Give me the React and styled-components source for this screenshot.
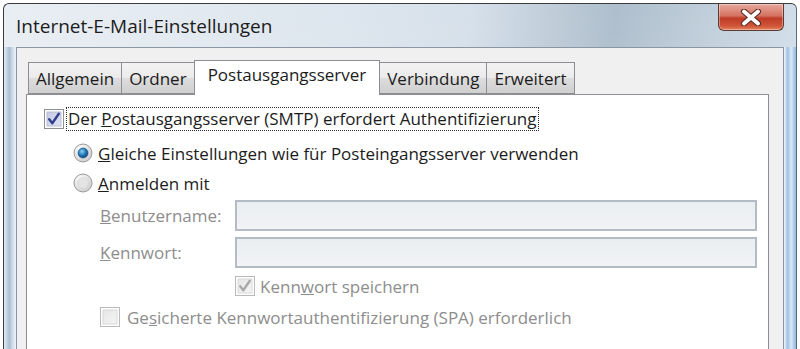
import React from "react";
import styled, { createGlobalStyle } from "styled-components";

const GlobalStyle = createGlobalStyle`
  html, body {
    margin: 0;
    padding: 0;
    background: #ffffff;
    overflow: hidden;
  }
  body {
    width: 800px;
    height: 349px;
    font-family: "Open Sans", "Noto Sans", Arial, sans-serif;
  }
`;

const tabs = [
  { id: "general", label: "Allgemein" },
  { id: "folder", label: "Ordner" },
  { id: "outgoing", label: "Postausgangsserver" },
  { id: "connection", label: "Verbindung" },
  { id: "advanced", label: "Erweitert" },
];

function CheckBox({ checked, disabled }) {
  const border = disabled ? "#b9b9b9" : "#8e8f8f";
  const fill = disabled ? "#f4f4f4" : "#dfe3f3";
  const tick = disabled ? "#a9a9a9" : "#333f8c";
  return (
    <svg width="20" height="20" viewBox="0 0 20 20">
      <defs>
        <linearGradient id={`cb-${disabled ? "d" : "e"}`} x1="0" y1="0" x2="1" y2="1">
          <stop offset="0" stopColor={disabled ? "#e6e6e6" : "#c6cbe4"} />
          <stop offset="1" stopColor={fill} />
        </linearGradient>
      </defs>
      <rect x="0.5" y="0.5" width="19" height="19" fill="#fdfdfd" stroke={border} />
      <rect x="3" y="3" width="14" height="14" fill={`url(#cb-${disabled ? "d" : "e"})`} stroke={disabled ? "#d3d3d3" : "#aeb3cf"} strokeWidth="0.8" />
      {checked && (
        <path d="M5.2 10.2 L8.3 14.2 L14.8 4.8" fill="none" stroke={tick} strokeWidth="2.4" strokeLinecap="round" strokeLinejoin="round" />
      )}
    </svg>
  );
}

function Radio({ checked }) {
  return (
    <svg width="20" height="20" viewBox="0 0 20 20">
      <defs>
        <radialGradient id="rd-ring" cx="0.35" cy="0.3" r="0.8">
          <stop offset="0" stopColor="#ffffff" />
          <stop offset="1" stopColor="#c9c9c9" />
        </radialGradient>
        <radialGradient id="rd-dot" cx="0.4" cy="0.35" r="0.7">
          <stop offset="0" stopColor="#8fd0f5" />
          <stop offset="0.55" stopColor="#1e78b8" />
          <stop offset="1" stopColor="#0d3f6e" />
        </radialGradient>
      </defs>
      <circle cx="10" cy="10" r="9" fill="url(#rd-ring)" stroke="#9a9a9a" />
      {checked ? (
        <circle cx="10" cy="10" r="5" fill="url(#rd-dot)" stroke="#1b4c78" strokeWidth="0.6" />
      ) : (
        <circle cx="10" cy="10" r="5.5" fill="#e4e4e4" stroke="#d0d0d0" strokeWidth="0.6" />
      )}
    </svg>
  );
}

export default function App() {
  return (
    <>
      <GlobalStyle />
      <Window>
        <TitleBar>
          <Title>Internet-E-Mail-Einstellungen</Title>
          <CloseButton>
            <svg width="24" height="17" viewBox="0 0 24 17">
              <path d="M5 2.5 L19 14.5 M19 2.5 L5 14.5" stroke="#5a2a22" strokeWidth="6" strokeLinecap="round" />
              <path d="M5 2.5 L19 14.5 M19 2.5 L5 14.5" stroke="#ffffff" strokeWidth="3.8" strokeLinecap="round" />
            </svg>
          </CloseButton>
        </TitleBar>
        <FrameBody>
          <SideFrame side="left" />
          <Client>
            <TabStrip>
              {tabs.map((tab) => (
                <Tab key={tab.id} active={tab.id === "outgoing"}>
                  {tab.label}
                </Tab>
              ))}
            </TabStrip>
            <Panel>
              <CheckRow>
                <CheckBox checked />
                <FocusLabel>
                  Der <u>P</u>ostausgangsserver (SMTP) erfordert Authentifizierung
                </FocusLabel>
              </CheckRow>
              <RadioGroup>
                <OptionRow>
                  <Radio checked />
                  <Label>
                    <u>G</u>leiche Einstellungen wie für Posteingangsserver verwenden
                  </Label>
                </OptionRow>
                <OptionRow>
                  <Radio />
                  <Label>
                    <u>A</u>nmelden mit
                  </Label>
                </OptionRow>
              </RadioGroup>
              <Fields>
                <FieldLabel>
                  <u>B</u>enutzername:
                </FieldLabel>
                <Input />
                <FieldLabel>
                  <u>K</u>ennwort:
                </FieldLabel>
                <Input />
                <span />
                <OptionRow>
                  <CheckBox checked disabled />
                  <Label disabled>
                    Kenn<u>w</u>ort speichern
                  </Label>
                </OptionRow>
              </Fields>
              <SpaRow>
                <CheckBox disabled />
                <Label disabled>
                  Ge<u>s</u>icherte Kennwortauthentifizierung (SPA) erforderlich
                </Label>
              </SpaRow>
            </Panel>
          </Client>
          <SideFrame side="right" />
        </FrameBody>
      </Window>
    </>
  );
}

const Window = styled.div`
  margin: 3px 0 0 3px;
  width: 794px;
  height: 346px;
  display: flex;
  flex-direction: column;
  box-sizing: border-box;
  border-top: 1px solid #3c3c3c;
  border-left: 1px solid #3c3c3c;
  border-right: 1px solid #5a6a7a;
  border-radius: 6px 6px 0 0;
  overflow: hidden;
  background: linear-gradient(
      to bottom,
      rgba(255, 255, 255, 0) 0%,
      rgba(255, 255, 255, 0.25) 100%
    ),
    linear-gradient(
      100deg,
      #e9eef3 0%,
      #dde6ee 40%,
      #d6e0ea 55%,
      #aebecc 72%,
      #c4d2de 85%,
      #dce6ef 100%
    );
`;

const TitleBar = styled.div`
  height: 43px;
  display: flex;
  align-items: flex-start;
  justify-content: space-between;
  padding-left: 12px;
`;

const Title = styled.div`
  margin-top: 9px;
  font-size: 19px;
  color: #1c1c1c;
`;

const CloseButton = styled.div`
  width: 66px;
  height: 27px;
  margin-right: 12px;
  display: flex;
  align-items: center;
  justify-content: center;
  box-sizing: border-box;
  border: 1px solid #5d3a34;
  border-top: none;
  border-radius: 0 0 6px 6px;
  background: linear-gradient(
    to bottom,
    #e8a99c 0%,
    #d47262 45%,
    #bf3b26 55%,
    #d0563a 85%,
    #e3865e 100%
  );
  box-shadow: inset 0 0 0 1px rgba(255, 255, 255, 0.35);
`;

const FrameBody = styled.div`
  flex: 1;
  display: flex;
`;

const SideFrame = styled.div`
  width: 12px;
  background: ${({ side }) =>
    side === "left"
      ? "linear-gradient(to right, #e3ebf3 0%, #a9bdd2 45%, #cfdce9 70%, #eef3f8 100%)"
      : "linear-gradient(to right, #f2f5f8 0%, #9fc3e6 30%, #d8e9f7 60%, #8fb6dc 100%)"};
`;

const Client = styled.div`
  flex: 1;
  display: flex;
  flex-direction: column;
  background: #f0f0f0;
  border-top: 1px solid #8a96a3;
  border-left: 1px solid #8a96a3;
  border-right: 1px solid #8a96a3;
  padding: 11px 14px 0 9px;
`;

const TabStrip = styled.div`
  display: flex;
  align-items: flex-end;
  padding-left: 3px;
  height: 35px;
  position: relative;
  z-index: 1;
`;

const Tab = styled.div`
  height: ${({ active }) => (active ? "35px" : "32px")};
  box-sizing: border-box;
  padding: ${({ active }) => (active ? "2px 13px 0" : "4px 7px 0")};
  margin-bottom: ${({ active }) => (active ? "-1px" : "0")};
  margin-left: -1px;
  font-size: 17px;
  color: #1c1c1c;
  border: 1px solid #8c8e94;
  border-bottom: ${({ active }) => (active ? "none" : "1px solid #8c8e94")};
  background: ${({ active }) =>
    active
      ? "#ffffff"
      : "linear-gradient(to bottom, #f2f2f2 0%, #ebebeb 50%, #dddddd 51%, #cfcfcf 100%)"};
  white-space: nowrap;
`;

const Panel = styled.div`
  flex: 1;
  background: #ffffff;
  border: 1px solid #8c8e94;
  border-bottom: none;
  padding: 12px 0 0 17px;
  display: flex;
  flex-direction: column;
`;

const CheckRow = styled.div`
  display: flex;
  align-items: center;
  height: 24px;
`;

const FocusLabel = styled.span`
  margin-left: 2px;
  padding: 0 1px;
  font-size: 17px;
  color: #1c1c1c;
  border: 1px dotted #2a2a2a;
  line-height: 22px;
`;

const RadioGroup = styled.div`
  margin: 10px 0 0 29px;
  display: flex;
  flex-direction: column;
  gap: 6px;
`;

const OptionRow = styled.div`
  display: flex;
  align-items: center;
  height: 24px;
  gap: 5px;
`;

const Label = styled.span`
  font-size: 17px;
  color: ${({ disabled }) => (disabled ? "#8d8d8d" : "#1c1c1c")};
`;

const Fields = styled.div`
  margin: 5px 11px 0 56px;
  display: grid;
  grid-template-columns: 135px 1fr;
  row-gap: 6px;
  align-items: center;
`;

const FieldLabel = styled.span`
  font-size: 17px;
  color: #8d8d8d;
`;

const Input = styled.div`
  height: 31px;
  box-sizing: border-box;
  border: 2px solid #b3bcc5;
  background: linear-gradient(to bottom, #eaeef1, #f1f3f5);
`;

const SpaRow = styled.div`
  display: flex;
  align-items: center;
  gap: 7px;
  height: 24px;
  margin: 7px 0 0 56px;
`;
